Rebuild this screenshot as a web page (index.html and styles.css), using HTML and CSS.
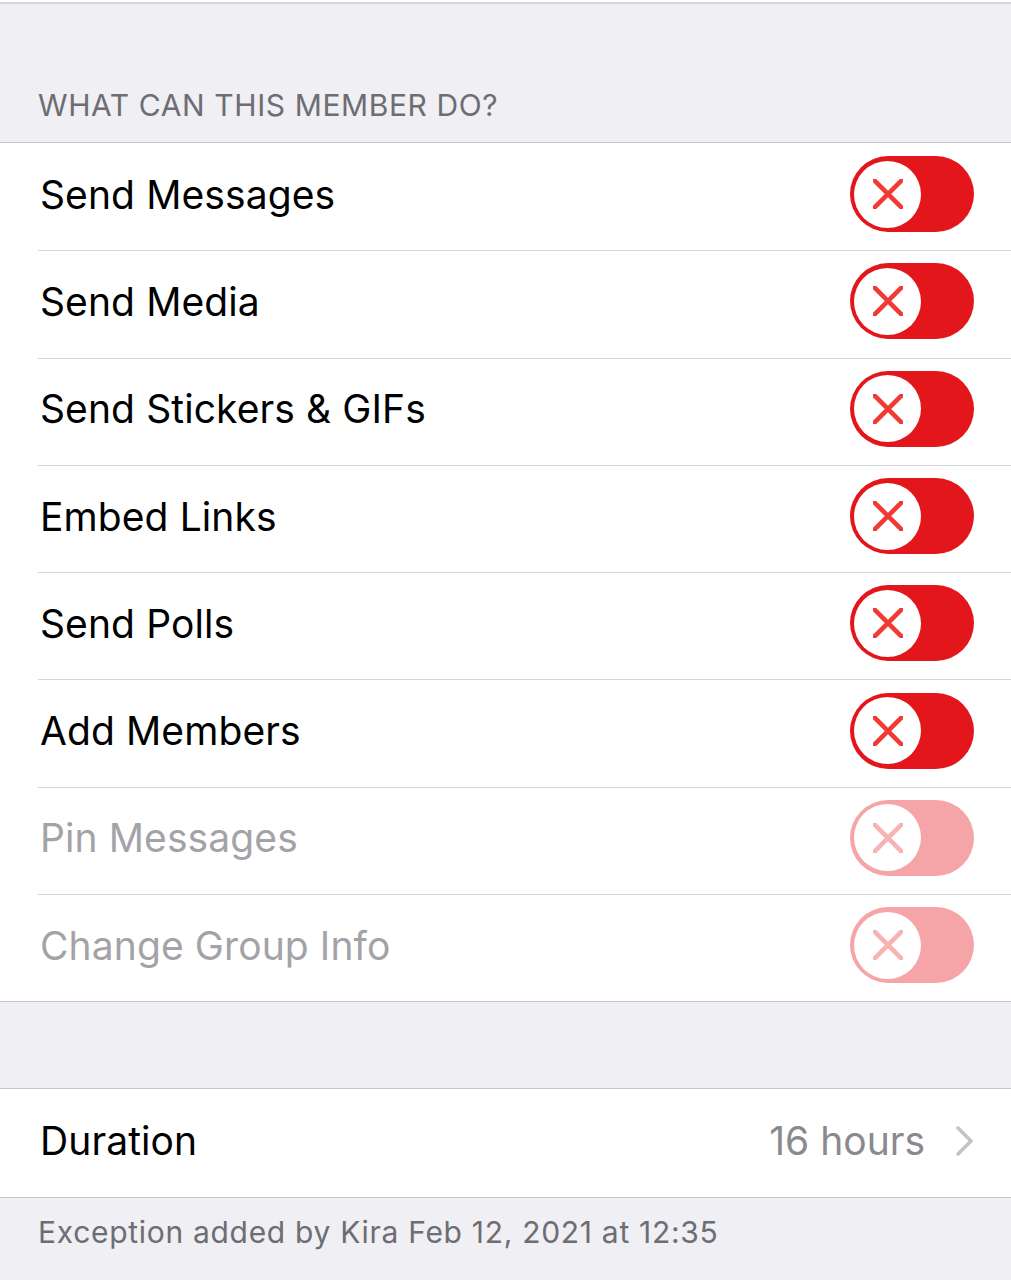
FILE: index.html
```html
<!DOCTYPE html>
<html lang="en">
  <head>
    <meta charset="UTF-8" />
    <meta name="viewport" content="width=device-width, initial-scale=1.0" />
    <title>Member Permissions</title>
    <link rel="stylesheet" href="styles.css">
  </head>
  <body>
    <div class="screen">
      <div class="section-header">
        <span>WHAT CAN THIS MEMBER DO?</span>
      </div>

      <ul class="group">
        <li class="row"><span class="label">Send Messages</span><span class="switch"><span class="knob"><svg viewBox="0 0 30 30"><path d="M1 1 L29 29 M29 1 L1 29" /></svg></span></span></li>
        <li class="row"><span class="label">Send Media</span><span class="switch"><span class="knob"><svg viewBox="0 0 30 30"><path d="M1 1 L29 29 M29 1 L1 29" /></svg></span></span></li>
        <li class="row"><span class="label">Send Stickers &amp; GIFs</span><span class="switch"><span class="knob"><svg viewBox="0 0 30 30"><path d="M1 1 L29 29 M29 1 L1 29" /></svg></span></span></li>
        <li class="row"><span class="label">Embed Links</span><span class="switch"><span class="knob"><svg viewBox="0 0 30 30"><path d="M1 1 L29 29 M29 1 L1 29" /></svg></span></span></li>
        <li class="row"><span class="label">Send Polls</span><span class="switch"><span class="knob"><svg viewBox="0 0 30 30"><path d="M1 1 L29 29 M29 1 L1 29" /></svg></span></span></li>
        <li class="row"><span class="label">Add Members</span><span class="switch"><span class="knob"><svg viewBox="0 0 30 30"><path d="M1 1 L29 29 M29 1 L1 29" /></svg></span></span></li>
        <li class="row disabled"><span class="label">Pin Messages</span><span class="switch"><span class="knob"><svg viewBox="0 0 30 30"><path d="M1 1 L29 29 M29 1 L1 29" /></svg></span></span></li>
        <li class="row disabled"><span class="label">Change Group Info</span><span class="switch"><span class="knob"><svg viewBox="0 0 30 30"><path d="M1 1 L29 29 M29 1 L1 29" /></svg></span></span></li>
      </ul>

      <div class="spacer"></div>

      <ul class="group">
        <li class="row">
          <span class="label">Duration</span>
          <span class="value">
            16 hours
            <svg class="chevron" viewBox="0 0 18 30"><path d="M2 2 L15 15 L2 28" /></svg>
          </span>
        </li>
      </ul>

      <p class="footer">Exception added by Kira Feb 12, 2021 at 12:35</p>
    </div>
  </body>
</html>
```

FILE: styles.css
```css
* {
  box-sizing: border-box;
  margin: 0;
  padding: 0;
}

body {
  background-color: #efeff4;
  font-family: Inter, "Noto Sans", sans-serif;
  width: 1011px;
  height: 1280px;
  overflow: hidden;
}

.screen {
  border-top: 2px solid #ffffff;
}

.section-header {
  height: 140px;
  border-top: 2px solid #d6d6da;
  display: flex;
  align-items: flex-end;
  padding: 0 0 19px 38px;
  font-size: 30px;
  color: #6d6d72;
  letter-spacing: 0.6px;
}

.group {
  list-style: none;
  background-color: #fff;
  border-top: 1px solid #c8c7cc;
  border-bottom: 1px solid #c8c7cc;
}

.row {
  position: relative;
  height: 107.3px;
  display: flex;
  align-items: center;
  justify-content: space-between;
  padding: 0 37px 5px 40px;
}

.row + .row::before {
  content: "";
  position: absolute;
  top: 0;
  left: 38px;
  right: 0;
  border-top: 1.5px solid #d6d6da;
}

.label {
  font-size: 39px;
  color: #000;
  letter-spacing: 0.1px;
}

.switch {
  width: 124px;
  height: 76px;
  border-radius: 38px;
  background-color: #e3161b;
  display: flex;
  align-items: center;
  padding-left: 4px;
}

.knob {
  width: 67px;
  height: 67px;
  border-radius: 50%;
  background-color: #fff;
  display: flex;
  align-items: center;
  justify-content: center;
}

.knob svg {
  width: 30px;
  height: 30px;
  fill: none;
  stroke: #f23a35;
  stroke-width: 4.6;
  stroke-linecap: round;
}

.disabled .label {
  color: #a3a3a7;
}

.disabled .switch {
  background-color: #f5a5a7;
}

.disabled .knob svg {
  stroke: #f7b3b1;
}

.spacer {
  height: 86px;
}

.value {
  display: flex;
  align-items: center;
  gap: 31px;
  font-size: 39px;
  color: #8a8a8e;
}

.chevron {
  width: 18px;
  height: 30px;
  fill: none;
  stroke: #c4c4c7;
  stroke-width: 3.5;
  stroke-linecap: round;
  stroke-linejoin: round;
}

.footer {
  padding: 16px 0 0 38px;
  font-size: 30px;
  color: #6d6d72;
  letter-spacing: 0.7px;
}
```
